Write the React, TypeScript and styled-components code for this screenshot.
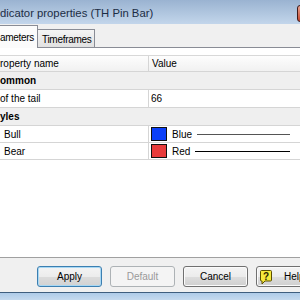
import React from "react";
import styled, { createGlobalStyle, css } from "styled-components";

const Global = createGlobalStyle`
  html, body { margin: 0; padding: 0; width: 300px; height: 300px; overflow: hidden; background: #f0f0f0; }
  #root { width: 300px; height: 300px; }
`;

const Window = styled.div`
  width: 300px;
  height: 300px;
  display: flex;
  flex-direction: column;
  overflow: hidden;
  font-family: "Liberation Sans", Arial, sans-serif;
  font-size: 10px;
  color: #000;
  background: #f0f0f0;
`;

const TitleBar = styled.div`
  height: 24px;
  flex-shrink: 0;
  display: flex;
  align-items: center;
  background: linear-gradient(#9ab3d1, #c3d6eb);
`;

const Title = styled.span`
  flex: 1;
  font-size: 11.3px;
  color: #1c2d45;
  padding-top: 2px;
  white-space: nowrap;
`;

const CloseButton = styled.div`
  align-self: flex-start;
  margin-top: 5px;
  width: 43px;
  height: 17px;
  margin-right: -40px;
  flex-shrink: 0;
  box-sizing: border-box;
  border: 1px solid #3d1a1a;
  border-radius: 3px;
  background: linear-gradient(#e9a491, #c5462d);
`;

const TabStrip = styled.div`
  height: 24px;
  flex-shrink: 0;
  box-sizing: border-box;
  display: flex;
  align-items: flex-end;
  border-bottom: 1px solid #898c95;
  background: #f0f0f0;
`;

const Tab = styled.div<{ $active?: boolean }>`
  box-sizing: border-box;
  border: 1px solid #898c95;
  border-bottom: none;
  display: flex;
  align-items: center;
  white-space: nowrap;
  overflow: hidden;
  font-size: 10px;
  letter-spacing: -0.3px;
  ${(p) =>
    p.$active
      ? css`
          width: 38px;
          height: 23px;
          margin-bottom: -1px;
          border-left: none;
          background: #fbfbfb;
          padding-left: 0;
        `
      : css`
          width: 57px;
          height: 18px;
          border-left: none;
          background: linear-gradient(#f5f5f5, #e1e1e1);
          padding-left: 4px;
          padding-top: 1px;
        `}
`;

const Panel = styled.div`
  height: 210px;
  flex-shrink: 0;
  box-sizing: border-box;
  background: #fff;
  border-bottom: 1px solid #a0a0a0;
  padding-top: 7px;
`;

const Table = styled.div`
  width: 300px;
  border-top: 1px solid #d8d8d8;
`;

const HeaderRow = styled.div`
  display: grid;
  grid-template-columns: 149px 1fr;
  height: 16px;
  box-sizing: border-box;
  background: linear-gradient(#fdfdfd, #f1f1f1);
  border-bottom: 1px solid #d5d5d5;
`;

const HeaderCell = styled.div<{ $first?: boolean }>`
  display: flex;
  align-items: center;
  white-space: nowrap;
  overflow: hidden;
  padding-left: ${(p) => (p.$first ? "0" : "3px")};
  border-right: ${(p) => (p.$first ? "1px solid #d5d5d5" : "none")};
`;

const GroupRow = styled.div`
  height: 18px;
  box-sizing: border-box;
  display: flex;
  align-items: center;
  background: #efefef;
  border-bottom: 1px solid #d5d5d5;
  font-weight: bold;
  white-space: nowrap;
`;

const PropRow = styled.div<{ $h?: number }>`
  display: grid;
  grid-template-columns: 149px 1fr;
  height: ${(p) => p.$h ?? 18}px;
  box-sizing: border-box;
  border-bottom: 1px solid #d5d5d5;
`;

const NameCell = styled.div<{ $indent?: number }>`
  display: flex;
  align-items: center;
  white-space: nowrap;
  overflow: hidden;
  padding-left: ${(p) => p.$indent ?? 0}px;
  border-right: 1px solid #d5d5d5;
`;

const ValueCell = styled.div`
  display: flex;
  align-items: center;
  padding-left: 2px;
  white-space: nowrap;
`;

const Swatch = styled.div<{ $color: string }>`
  width: 16px;
  height: 14px;
  box-sizing: border-box;
  border: 1px solid #111;
  background: ${(p) => p.$color};
  flex-shrink: 0;
`;

const ColorName = styled.span`
  margin-left: 5px;
`;

const LineSample = styled.div<{ $color: string }>`
  flex: 1;
  height: 1px;
  margin-left: 5px;
  margin-right: 10px;
  background: ${(p) => p.$color};
`;

const ButtonBar = styled.div`
  height: 34px;
  flex-shrink: 0;
  box-sizing: border-box;
  display: flex;
  gap: 8px;
  padding: 8px 0 0 37px;
`;

const Button = styled.div<{ $variant?: "default" | "disabled" | "normal" }>`
  width: 65px;
  height: 21px;
  flex-shrink: 0;
  box-sizing: border-box;
  border-radius: 3px;
  display: flex;
  align-items: center;
  justify-content: center;
  gap: 4px;
  font-size: 10px;
  ${(p) =>
    p.$variant === "default"
      ? css`
          border: 1px solid #3c7fb1;
          box-shadow: inset 0 0 0 1px #a8d8f4;
          background: linear-gradient(#f4f4f4 0%, #ececec 50%, #dcdcdc 51%, #d2d2d2 100%);
        `
      : p.$variant === "disabled"
      ? css`
          border: 1px solid #adb2b5;
          background: #f4f4f4;
          color: #9a9a9a;
        `
      : css`
          border: 1px solid #707070;
          box-shadow: inset 0 0 0 1px #fbfbfb;
          background: linear-gradient(#f4f4f4 0%, #ececec 50%, #dddddd 51%, #cfcfcf 100%);
        `}
`;

const HelpButton = styled(Button)`
  justify-content: flex-start;
  padding-left: 2px;
  gap: 11px;
`;

const BottomFrame = styled.div`
  flex: 1;
  border-top: 1px solid #3f5e7e;
  background: linear-gradient(#aecbe8, #c6daee);
`;

const HelpIcon = () => (
  <svg width="14" height="16" viewBox="0 0 14 16">
    <path d="M2.5 1.5 H11.5 Q12.5 1.5 12.5 2.5 V11 Q12.5 12 11.5 12 H6 L3 15 V12 H2.5 Q1.5 12 1.5 11 V2.5 Q1.5 1.5 2.5 1.5 Z" fill="#f6e83c" stroke="#5b4f00" strokeWidth="1" />
    <text x="7" y="10.5" textAnchor="middle" fontSize="10" fontWeight="bold" fontFamily="Liberation Sans, Arial, sans-serif" fill="#2a2400">?</text>
  </svg>
);

export default function App() {
  return (
    <>
      <Global />
      <Window>
        <TitleBar>
          <Title>dicator properties (TH Pin Bar)</Title>
          <CloseButton />
        </TitleBar>
        <TabStrip>
          <Tab $active>ameters</Tab>
          <Tab>Timeframes</Tab>
        </TabStrip>
        <Panel>
          <Table>
            <HeaderRow>
              <HeaderCell $first>roperty name</HeaderCell>
              <HeaderCell>Value</HeaderCell>
            </HeaderRow>
            <GroupRow>ommon</GroupRow>
            <PropRow>
              <NameCell>of the tail</NameCell>
              <ValueCell>66</ValueCell>
            </PropRow>
            <GroupRow>yles</GroupRow>
            <PropRow $h={17}>
              <NameCell $indent={4}>Bull</NameCell>
              <ValueCell>
                <Swatch $color="#0b3ff8" />
                <ColorName>Blue</ColorName>
                <LineSample $color="#555" />
              </ValueCell>
            </PropRow>
            <PropRow $h={17}>
              <NameCell $indent={4}>Bear</NameCell>
              <ValueCell>
                <Swatch $color="#e83b3b" />
                <ColorName>Red</ColorName>
                <LineSample $color="#000" />
              </ValueCell>
            </PropRow>
          </Table>
        </Panel>
        <ButtonBar>
          <Button $variant="default">Apply</Button>
          <Button $variant="disabled">Default</Button>
          <Button>Cancel</Button>
          <HelpButton>
            <HelpIcon />
            Help
          </HelpButton>
        </ButtonBar>
        <BottomFrame />
      </Window>
    </>
  );
}
